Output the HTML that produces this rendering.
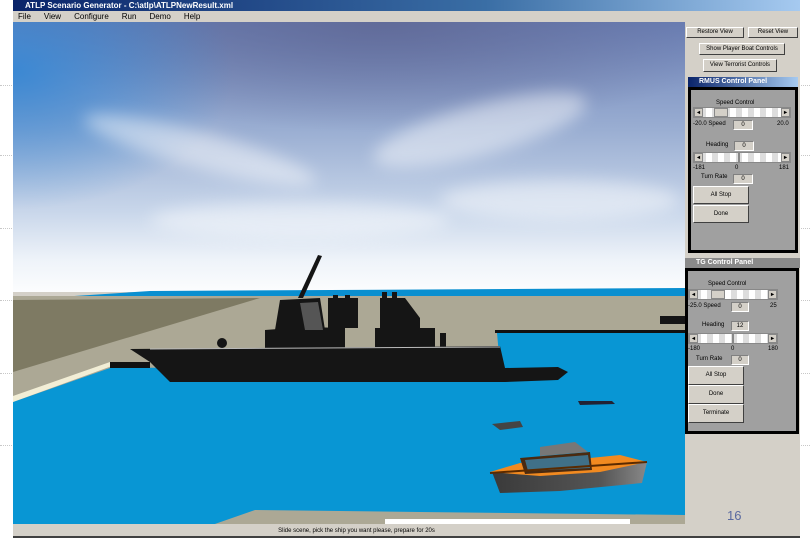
<!DOCTYPE html>
<html><head><meta charset="utf-8"><style>
*{margin:0;padding:0;box-sizing:border-box}
body{width:810px;height:540px;overflow:hidden;background:#fff;font-family:"Liberation Sans",sans-serif;position:relative}
.dl{position:absolute;height:0;border-top:1px dotted #c8c8c8}
.win{position:absolute;left:13px;top:0;width:787px;height:538px;background:#d4d0c8;border-bottom:2px solid #404040}
.title{position:absolute;left:0;top:0;width:787px;height:11px;background:linear-gradient(90deg,#0a246a,#3a6ea5 60%,#a6caf0);color:#fff;font-size:8px;font-weight:bold;line-height:11px;padding-left:12px}
.menu{position:absolute;left:0;top:11px;height:11px;font-size:8px;line-height:11px;color:#000}
.menu span{margin-left:5px;margin-right:8px}
.btn{position:absolute;background:#d4d0c8;border:1px solid;border-color:#fff #404040 #404040 #fff;font-size:6px;text-align:center;color:#000}
.pt{position:absolute;height:10px;font-size:7px;font-weight:bold;color:#fff;line-height:10px;padding-left:11px}
.pb{position:absolute;background:#a0a0a0;border:3px solid #000}
.lbl{position:absolute;font-size:6px;color:#000}
.fld{position:absolute;background:#d4d0c8;border:1px solid #fff;border-color:#808080 #fff #fff #808080;font-size:6px;text-align:center;line-height:9px}
.sl{position:absolute;height:11px;background:repeating-linear-gradient(90deg,#fff 0 6px,#ddd 6px 12px);border:1px solid #888}
.sl b{position:absolute;top:0;width:9px;height:9px;background:#d4d0c8;border:1px solid #888;font-size:6px;line-height:9px;text-align:center}
</style></head><body>
<div class="dl" style="left:0;top:85px;width:12px"></div><div class="dl" style="left:0;top:155px;width:12px"></div><div class="dl" style="left:0;top:228px;width:12px"></div><div class="dl" style="left:0;top:300px;width:12px"></div><div class="dl" style="left:0;top:373px;width:12px"></div><div class="dl" style="left:0;top:445px;width:12px"></div>
<div class="dl" style="left:801px;top:85px;width:9px"></div><div class="dl" style="left:801px;top:155px;width:9px"></div><div class="dl" style="left:801px;top:228px;width:9px"></div><div class="dl" style="left:801px;top:300px;width:9px"></div><div class="dl" style="left:801px;top:373px;width:9px"></div><div class="dl" style="left:801px;top:445px;width:9px"></div>
<div class="win">
<div class="title">ATLP Scenario Generator - C:\atlp\ATLPNewResult.xml</div>
<div class="menu"><span>File</span><span>View</span><span>Configure</span><span>Run</span><span>Demo</span><span>Help</span></div>
<svg style="position:absolute;left:0;top:22px" width="672" height="502" viewBox="13 22 672 502">
<defs>
<linearGradient id="sky" x1="0" y1="0" x2="0" y2="1"><stop offset="0" stop-color="#6b80b6"/><stop offset=".4" stop-color="#9aaed2"/><stop offset=".7" stop-color="#c8d6ea"/><stop offset=".88" stop-color="#eef3f9"/><stop offset="1" stop-color="#fcfdfe"/></linearGradient>
<radialGradient id="dk" cx=".55" cy="0" r=".55"><stop offset="0" stop-color="#5f6794" stop-opacity=".85"/><stop offset="1" stop-color="#5f6794" stop-opacity="0"/></radialGradient>
<radialGradient id="bl" cx="0" cy=".2" r=".55"><stop offset="0" stop-color="#2f86d6" stop-opacity=".85"/><stop offset="1" stop-color="#2f86d6" stop-opacity="0"/></radialGradient>
<linearGradient id="hull" x1="0" y1="0" x2="1" y2="0"><stop offset="0" stop-color="#3a3a3a"/><stop offset=".7" stop-color="#555"/><stop offset="1" stop-color="#888"/></linearGradient>
<filter id="bf"><feGaussianBlur stdDeviation="8"/></filter>
</defs>
<rect x="13" y="22" width="672" height="270" fill="url(#sky)"/>
<rect x="13" y="22" width="672" height="200" fill="url(#dk)"/>
<rect x="13" y="22" width="400" height="250" fill="url(#bl)"/>
<g filter="url(#bf)" fill="#fff" opacity=".45">
<ellipse cx="480" cy="130" rx="110" ry="25" transform="rotate(-15 480 130)"/>
<ellipse cx="200" cy="150" rx="120" ry="18" transform="rotate(15 200 150)"/>
<ellipse cx="560" cy="200" rx="120" ry="20"/>
<ellipse cx="300" cy="220" rx="150" ry="18"/>
</g>
<polygon points="150,291 685,288 685,297 13,300" fill="#0a8fd0"/>
<rect x="13" y="296" width="672" height="230" fill="#aca895"/>
<polygon points="13,300 260,298 13,372" fill="#7e7a63"/>
<polygon points="13,402 13,525 685,525 685,333 497,333 500,366 110,368" fill="#0896d4"/>
<polygon points="13,396 110,362 112,366 13,402" fill="#f2eed6"/>
<rect x="110" y="362" width="40" height="6" fill="#111"/>
<rect x="495" y="330" width="190" height="3" fill="#111"/>
<polygon points="212,525 255,510 420,512 685,515 685,525" fill="#aca895"/>
<rect x="385" y="519" width="245" height="5" fill="#fff"/>
<g fill="#151515">
<polygon points="130,349 500,346 505,368 558,367 568,372 558,380 505,382 170,382 150,362"/>
<polygon points="265,330 305,327 345,328 345,350 265,350"/>
<polygon points="280,300 320,298 325,330 275,330"/>
<rect x="328" y="298" width="30" height="30"/>
<rect x="333" y="295" width="5" height="5"/><rect x="345" y="295" width="5" height="5"/>
<polygon points="380,298 405,298 420,318 420,333 380,333"/>
<rect x="375" y="328" width="60" height="22"/>
<rect x="382" y="292" width="5" height="6"/><rect x="392" y="292" width="5" height="6"/>
<polygon points="298,298 318,255 322,256 303,298"/>
<circle cx="222" cy="343" r="5"/>
<rect x="440" y="333" width="6" height="16"/>
<rect x="660" y="316" width="25" height="8"/>
</g>
<polygon points="300,303 318,302 323,330 305,330" fill="#555"/>
<line x1="150" y1="349" x2="500" y2="347" stroke="#bbb" stroke-width="1"/>
<polygon points="492,424 520,421 523,427 500,430" fill="#444"/>
<polygon points="578,401 612,401 615,404 580,405" fill="#223"/>
<polygon points="492,472 647,462 642,483 560,491 500,493" fill="url(#hull)"/>
<polygon points="490,472 520,463 590,458 620,455 647,462 600,472 540,476" fill="#f28a20"/>
<polygon points="520,458 590,452 592,470 525,474" fill="#4a2a10"/>
<polygon points="525,460 588,455 590,468 528,471" fill="#3aa0d8" opacity=".6"/>
<polygon points="540,447 575,442 588,452 540,456" fill="#777"/>
<line x1="490" y1="473" x2="647" y2="462" stroke="#5a2a00" stroke-width="2"/>
</svg>
<div style="position:absolute;left:0;top:524px;width:787px;height:14px;font-size:6px;text-align:center;line-height:14px;padding-right:100px">Slide scene, pick the ship you want please, prepare for 20s</div>
<div class="btn" style="left:673px;top:27px;width:58px;height:11px;line-height:9px">Restore View</div>
<div class="btn" style="left:735px;top:27px;width:50px;height:11px;line-height:9px">Reset View</div>
<div class="btn" style="left:686px;top:43px;width:86px;height:12px;line-height:10px">Show Player Boat Controls</div>
<div class="btn" style="left:690px;top:59px;width:74px;height:13px;line-height:11px">View Terrorist Controls</div>
<div class="pt" style="left:675px;top:77px;width:110px;background:linear-gradient(90deg,#0a246a,#a6caf0)">RMUS Control Panel</div>
<div class="pb" style="left:675px;top:87px;width:110px;height:166px">
<div class="lbl" style="left:25px;top:10px">Speed Control</div>
<div class="sl" style="left:2px;top:17px;width:98px"><b style="left:0">◂</b><b style="left:20px;width:14px"></b><b style="right:0">▸</b></div>
<div class="lbl" style="left:2px;top:31px">-20.0 Speed</div><div class="fld" style="left:42px;top:30px;width:20px;height:10px">0</div><div class="lbl" style="left:86px;top:31px">20.0</div>
<div class="lbl" style="left:15px;top:52px">Heading</div><div class="fld" style="left:43px;top:51px;width:20px;height:10px">0</div>
<div class="sl" style="left:2px;top:62px;width:98px"><b style="left:0">◂</b><b style="left:44px;width:2px"></b><b style="right:0">▸</b></div>
<div class="lbl" style="left:2px;top:75px">-181</div><div class="lbl" style="left:44px;top:75px">0</div><div class="lbl" style="left:88px;top:75px">181</div>
<div class="lbl" style="left:10px;top:84px">Turn Rate</div><div class="fld" style="left:42px;top:84px;width:20px;height:10px">0</div>
<div class="btn" style="left:2px;top:96px;width:56px;height:18px;line-height:16px">All Stop</div>
<div class="btn" style="left:2px;top:115px;width:56px;height:18px;line-height:16px">Done</div>
</div>
<div class="pt" style="left:672px;top:258px;width:115px;background:#8a8a8a">TG Control Panel</div>
<div class="pb" style="left:672px;top:268px;width:114px;height:166px">
<div class="lbl" style="left:20px;top:10px">Speed Control</div>
<div class="sl" style="left:0;top:18px;width:90px"><b style="left:0">◂</b><b style="left:22px;width:14px"></b><b style="right:0">▸</b></div>
<div class="lbl" style="left:0;top:32px">-25.0 Speed</div><div class="fld" style="left:43px;top:31px;width:18px;height:10px">0</div><div class="lbl" style="left:82px;top:32px">25</div>
<div class="lbl" style="left:14px;top:51px">Heading</div><div class="fld" style="left:43px;top:50px;width:18px;height:10px">12</div>
<div class="sl" style="left:0;top:62px;width:90px"><b style="left:0">◂</b><b style="left:43px;width:2px"></b><b style="right:0">▸</b></div>
<div class="lbl" style="left:0;top:75px">-180</div><div class="lbl" style="left:43px;top:75px">0</div><div class="lbl" style="left:80px;top:75px">180</div>
<div class="lbl" style="left:8px;top:85px">Turn Rate</div><div class="fld" style="left:43px;top:84px;width:18px;height:10px">0</div>
<div class="btn" style="left:0;top:95px;width:56px;height:19px;line-height:17px">All Stop</div>
<div class="btn" style="left:0;top:114px;width:56px;height:19px;line-height:17px">Done</div>
<div class="btn" style="left:0;top:133px;width:56px;height:19px;line-height:17px">Terminate</div>
</div>
<div style="position:absolute;left:714px;top:508px;font-size:13px;color:#5a6aa0">16</div>
</div>
</body></html>
